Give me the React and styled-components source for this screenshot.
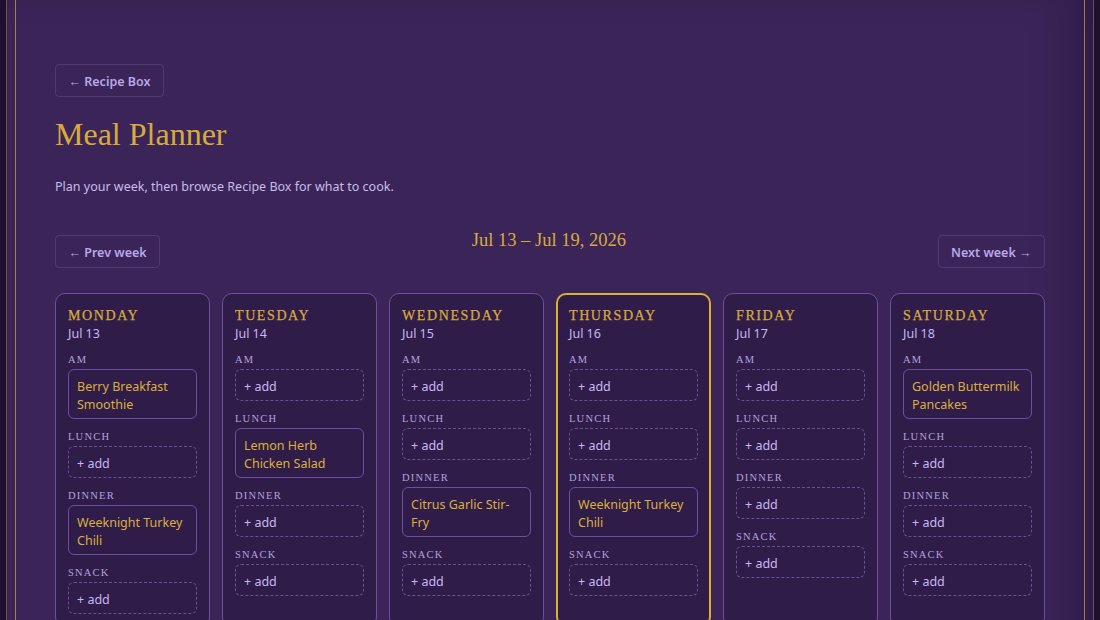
import React from 'react';
import styled, { createGlobalStyle } from 'styled-components';

const Global = createGlobalStyle`
  html, body {
    margin: 0;
    padding: 0;
    background: #1f1030;
  }
  body {
    font-family: "Noto Sans", "Open Sans", sans-serif;
    color: #c6b8ee;
  }
`

const Frame = styled.div`
  position: relative;
  box-sizing: border-box;
  max-width: 1088px;
  min-height: 100vh;
  margin: 0 auto;
  padding: 64px 48px 40px;
  background: #3b2458;
  border-left: 1px solid rgba(212, 168, 58, 0.35);
  border-right: 1px solid rgba(212, 168, 58, 0.35);
  box-shadow: inset -40px 0 50px -30px rgba(10, 0, 20, 0.35);

  &::before {
    content: '';
    position: absolute;
    top: 0;
    bottom: 0;
    left: 8px;
    right: 8px;
    border-left: 1px solid rgba(212, 168, 58, 0.7);
    border-right: 1px solid rgba(212, 168, 58, 0.7);
    pointer-events: none;
  }
`

const GhostButton = styled.button`
  box-sizing: border-box;
  height: 33px;
  padding: 1px 12.5px 0;
  background: transparent;
  border: 1px solid rgba(190, 170, 240, 0.16);
  border-radius: 4px;
  color: #b8a8e8;
  font-family: "Noto Sans", "Open Sans", sans-serif;
  font-size: 12.5px;
  font-weight: 600;
  cursor: pointer;
`

const Title = styled.h1`
  margin: 18px 0 0;
  font-family: "Liberation Serif", serif;
  font-size: 32px;
  line-height: 38px;
  font-weight: 400;
  color: #d6ab3c;
`

const Subtitle = styled.p`
  margin: 25px 0 0;
  font-size: 12.5px;
  line-height: 18px;
  color: #c8bcea;
`

const Nav = styled.div`
  display: flex;
  justify-content: space-between;
  align-items: flex-start;
  margin-top: 39px;
`

const WeekLabel = styled.h2`
  margin: -6px 0 0;
  font-family: "Liberation Serif", serif;
  font-size: 18.5px;
  line-height: 23px;
  font-weight: 400;
  color: #d6ab3c;
`

const Grid = styled.div`
  display: grid;
  grid-template-columns: repeat(auto-fill, minmax(150px, 1fr));
  gap: 12px;
  margin-top: 25px;
`

const Day = styled.div`
  box-sizing: border-box;
  padding: ${p => (p.$today ? '12px 11px 11px' : '13px 12px 12px')};
  background: #301c49;
  border: ${p => (p.$today ? '2px solid #d8b133' : '1px solid #6c4f9f')};
  border-radius: 10px;
`

const DayName = styled.div`
  font-family: "Liberation Serif", serif;
  font-size: 14px;
  line-height: 18px;
  font-weight: 400;
  letter-spacing: 1.6px;
  text-transform: uppercase;
  color: #d6ab3c;
  -webkit-text-stroke: 0.25px #d6ab3c;
`

const DayDate = styled.div`
  font-size: 12.5px;
  line-height: 17px;
  color: #c6b8f0;
`

const Meal = styled.div`
  margin-top: 11px;
`

const MealLabel = styled.div`
  margin-bottom: 3px;
  font-family: "Liberation Serif", serif;
  font-size: 10.5px;
  line-height: 13px;
  letter-spacing: 1.2px;
  text-transform: uppercase;
  color: #b3a3dc;
`

const Slot = styled.div`
  box-sizing: border-box;
  padding: 8px 8px 4px;
  border: 1px ${p => (p.$filled ? 'solid #6c4f9f' : 'dashed #6a5192')};
  border-radius: 6px;
  font-size: 12.5px;
  line-height: 18px;
  color: ${p => (p.$filled ? '#d9b03c' : '#c6b8f0')};
`

const meals = ['AM', 'Lunch', 'Dinner', 'Snack'];

const week = [
  { name: 'Monday', date: 'Jul 13', plan: { AM: 'Berry Breakfast Smoothie', Dinner: 'Weeknight Turkey Chili' } },
  { name: 'Tuesday', date: 'Jul 14', plan: { Lunch: 'Lemon Herb Chicken Salad' } },
  { name: 'Wednesday', date: 'Jul 15', plan: { Dinner: 'Citrus Garlic Stir-Fry' } },
  { name: 'Thursday', date: 'Jul 16', plan: { Dinner: 'Weeknight Turkey Chili' }, today: true },
  { name: 'Friday', date: 'Jul 17', plan: {} },
  { name: 'Saturday', date: 'Jul 18', plan: { AM: 'Golden Buttermilk Pancakes' } },
  { name: 'Sunday', date: 'Jul 19', plan: {} },
];

export default function App() {
  return (
    <>
      <Global />
      <Frame>
        <GhostButton>← Recipe Box</GhostButton>
        <Title>Meal Planner</Title>
        <Subtitle>Plan your week, then browse Recipe Box for what to cook.</Subtitle>
        <Nav>
          <GhostButton>← Prev week</GhostButton>
          <WeekLabel>Jul 13 – Jul 19, 2026</WeekLabel>
          <GhostButton>Next week →</GhostButton>
        </Nav>
        <Grid>
          {week.map(day => (
            <Day key={day.name} $today={day.today}>
              <DayName>{day.name}</DayName>
              <DayDate>{day.date}</DayDate>
              {meals.map(meal => {
                const recipe = day.plan[meal];
                return (
                  <Meal key={meal}>
                    <MealLabel>{meal}</MealLabel>
                    <Slot $filled={!!recipe}>{recipe || '+ add'}</Slot>
                  </Meal>
                );
              })}
            </Day>
          ))}
        </Grid>
      </Frame>
    </>
  );
}
